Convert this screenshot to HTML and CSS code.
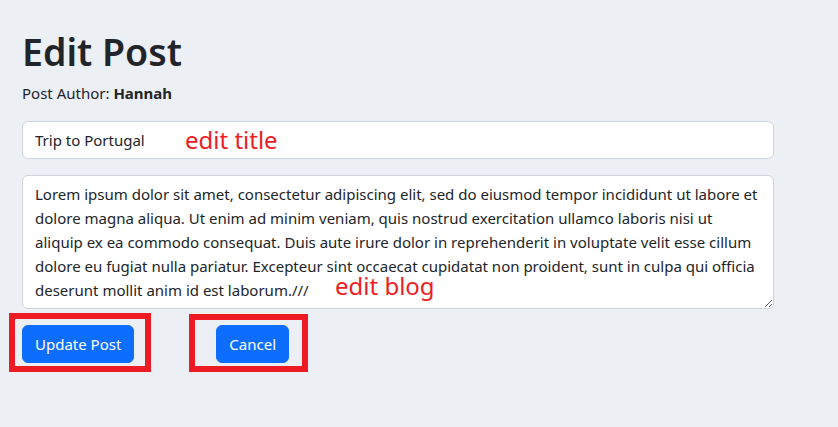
FILE: index.html
```html
<!DOCTYPE html>
<html lang="en">
<head>
<meta charset="utf-8">
<title>Edit Post</title>
<link rel="stylesheet" href="styles.css">
</head>
<body>
<main class="page">
  <h1 class="page-title">Edit Post</h1>
  <p class="author">Post Author: <strong>Hannah</strong></p>
  <form class="post-form">
    <div class="field">
      <input class="form-control" type="text" value="Trip to Portugal">
      <span class="note note-title">edit title</span>
    </div>
    <div class="field">
      <textarea class="form-control post-body" rows="5">Lorem ipsum dolor sit amet, consectetur adipiscing elit, sed do eiusmod tempor incididunt ut labore et dolore magna aliqua. Ut enim ad minim veniam, quis nostrud exercitation ullamco laboris nisi ut aliquip ex ea commodo consequat. Duis aute irure dolor in reprehenderit in voluptate velit esse cillum dolore eu fugiat nulla pariatur. Excepteur sint occaecat cupidatat non proident, sunt in culpa qui officia deserunt mollit anim id est laborum.///</textarea>
      <span class="note note-blog">edit blog</span>
    </div>
    <div class="actions">
      <div class="mark mark-update"><button class="btn" type="button">Update Post</button></div>
      <div class="mark mark-cancel"><button class="btn" type="button">Cancel</button></div>
    </div>
  </form>
</main>
</body>
</html>
```
FILE: styles.css
```css
* { box-sizing: border-box; }

html, body {
  margin: 0;
  background: #eceff4;
}

body {
  font-family: "Noto Sans", "Open Sans", sans-serif;
  font-size: 15px;
  line-height: 24px;
  color: #212529;
  min-height: 427px;
}

.page {
  padding: 29px 0 40px 22px;
  width: 774px;
}

.page-title {
  margin: 0 0 7px;
  font-size: 37.5px;
  font-weight: 600;
  line-height: 45px;
}

.author {
  margin: 0 0 16px;
}

.author strong {
  font-weight: 700;
}

.field {
  position: relative;
  margin-bottom: 16px;
}

.form-control {
  display: block;
  width: 100%;
  padding: 6px 12px;
  font: inherit;
  font-size: 15px;
  line-height: 24px;
  color: #212529;
  background: #fff;
  border: 1px solid #ced4da;
  border-radius: 6px;
}

.post-body {
  resize: vertical;
  height: 134px;
}

.note {
  position: absolute;
  color: #ed1c24;
  font-size: 24px;
  line-height: 1;
  pointer-events: none;
}

.note-title {
  left: 163px;
  top: 7px;
}

.note-blog {
  left: 313px;
  top: 99px;
}

.actions {
  display: flex;
  gap: 82px;
}

.mark {
  position: relative;
}

.mark::before {
  content: "";
  position: absolute;
  border: 6px solid #ed1c24;
}

.mark-update::before {
  left: -13px;
  right: -17px;
  top: -12px;
  bottom: -9px;
}

.mark-cancel::before {
  left: -27px;
  right: -19px;
  top: -11px;
  bottom: -9px;
}

.btn {
  display: block;
  padding: 6px 12px;
  font: inherit;
  font-size: 15px;
  line-height: 24px;
  color: #fff;
  background: #0d6efd;
  border: 1px solid #0d6efd;
  border-radius: 6px;
}
```
